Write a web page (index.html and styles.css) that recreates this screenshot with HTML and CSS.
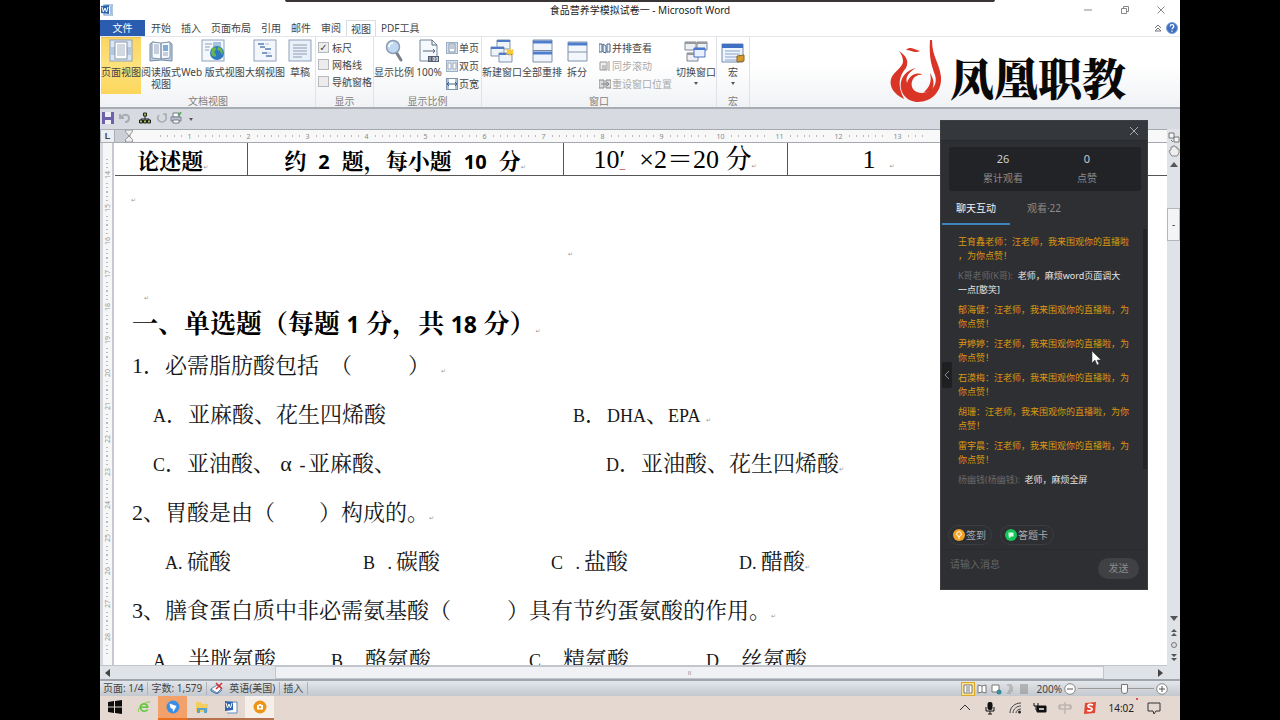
FILE: index.html
```html
<!DOCTYPE html>
<html lang="zh-CN">
<head>
<meta charset="utf-8">
<title>食品营养学模拟试卷一 - Microsoft Word</title>
<link rel="stylesheet" href="styles.css">
</head>
<body>
<div class="screen">
  <div class="share-bar"></div>

  <header class="titlebar">
    <svg class="app-icon" viewBox="0 0 12 12"><rect x="3" y="1" width="9" height="10" fill="#fff" stroke="#6d94c8"/><path d="M9 3h2M9 5h2M9 7h2M9 9h2" stroke="#4d7ab8"/><path d="M0 2l8-1v9l-8-1z" fill="#2b62ae"/><path d="M1 3l1.300 5L4 4l1.500 4L7 3" fill="none" stroke="#fff"/></svg>
    <h1 class="title">食品营养学模拟试卷一 - Microsoft Word</h1>
    <div class="window-buttons">
      <button aria-label="最小化"><svg viewBox="0 0 10 10"><path d="M1 5h8"/></svg></button>
      <button aria-label="还原"><svg viewBox="0 0 10 10"><path d="M1.500 3.500h5v5h-5zM3.500 3.500v-2h5v5h-2"/></svg></button>
      <button aria-label="关闭"><svg viewBox="0 0 10 10"><path d="M1.500 1.500l7 7M8.500 1.500l-7 7"/></svg></button>
    </div>
  </header>

  <nav class="tabs">
    <button class="tab file">文件</button>
    <button class="tab">开始</button>
    <button class="tab">插入</button>
    <button class="tab">页面布局</button>
    <button class="tab">引用</button>
    <button class="tab">邮件</button>
    <button class="tab">审阅</button>
    <button class="tab active">视图</button>
    <button class="tab">PDF工具</button>
    <span class="tabs-end">
      <svg class="i8" viewBox="0 0 8 8"><path d="M1 4l3-3 3 3M1 7l3-3 3 3z" fill="none" stroke="#777"/></svg>
      <svg class="i12" viewBox="0 0 12 12"><circle cx="6" cy="6" r="5.500" fill="#3e6fc0" stroke="#7da0d8"/><path d="M4.200 4.500c0-2.400 3.600-2.400 3.600 0C7.800 5.800 6 5.800 6 7.300M6 8.500v1.200" fill="none" stroke="#fff" stroke-width="1.300"/></svg>
    </span>
  </nav>

  <section class="ribbon">
    <div class="group g-views">
      <div class="group-body">
        <button class="big w40 selected"><svg viewBox="0 0 24 24"><rect x="1" y="1" width="22" height="21" fill="#dce6f2" stroke="#8ea2bd"/><rect x="1.500" y="8" width="21" height="8" fill="#b6c8dd"/><rect x="6" y="3" width="12" height="17" fill="#fff" stroke="#8795ab"/><path d="M8 6h8M8 8h8M8 10h8M8 12h8M8 14h8M8 16h8" stroke="#a5b1c2"/></svg>页面视图</button>
        <button class="big w40"><svg viewBox="0 0 24 24"><path d="M1 5l3-2 8 2 8-2 3 2v17l-11-1-11 1z" fill="#bdd0e4" stroke="#7488a3"/><path d="M3 3l9 1v16l-9-1zM21 3l-9 1v16l9-1z" fill="#f6f9fd" stroke="#8495ab"/><path d="M5 6h5M5 8h5M5 10h5M5 12h5M5 14h5M14 14h5M14 16h5" stroke="#94a4b8"/><rect x="14" y="6" width="5" height="6" fill="#7eacd8"/></svg>阅读版式<br>视图</button>
        <button class="big w62"><svg viewBox="0 0 24 24"><rect x="1" y="1" width="22" height="21" fill="#f4f8fd" stroke="#8ea2bd"/><path d="M4 5h7M4 8h5M4 11h4" stroke="#8fa1b8"/><rect x="12" y="3" width="8" height="5" fill="#a4c4e3"/><circle cx="16" cy="14" r="7" fill="#2e78c1"/><path d="M11 9c4-2 5 1 3 3s2 3 1 5-5-1-5-3zM17 8c4 0 6 5 4 8l-2-4-3-1z" fill="#67b64a"/></svg>Web 版式视图</button>
        <button class="big w40"><svg viewBox="0 0 24 24"><rect x="1" y="1" width="22" height="21" fill="#f3f7fc" stroke="#8ea2bd"/><path d="M5 5h6M7 8h5M12 10h6M9 14h5M13 17h6" stroke="#7d9bc4" stroke-width="2"/><path d="M12 5h4M14 14h4" stroke="#afc1d6"/></svg>大纲视图</button>
        <button class="big w28"><svg viewBox="0 0 24 24"><rect x="1" y="1" width="22" height="21" fill="#e9f0f8" stroke="#8ea2bd"/><path d="M5 6h14M5 9h14M5 12h14M5 15h14M5 18h9" stroke="#8b9cb3"/></svg>草稿</button>
      </div>
      <div class="group-name">文档视图</div>
    </div>
    <div class="group g-show">
      <div class="group-body checks">
        <label><input type="checkbox" checked>标尺</label>
        <label><input type="checkbox">网格线</label>
        <label><input type="checkbox">导航窗格</label>
      </div>
      <div class="group-name">显示</div>
    </div>
    <div class="group g-zoom">
      <div class="group-body">
        <button class="big w40"><svg viewBox="0 0 24 24"><path d="M14 13l5 8" stroke="#787f8c" stroke-width="3" stroke-linecap="round"/><circle cx="11" cy="8" r="6.500" fill="#bfd9f2" stroke="#8a9db5" stroke-width="1.500"/><path d="M7 8c0-3 2-4 4-4" stroke="#fff" stroke-width="1.500" fill="none"/></svg>显示比例</button>
        <button class="big w28"><svg viewBox="0 0 24 24"><path d="M3 1h12l5 5v16H3z" fill="#f5f8fc" stroke="#74859c"/><path d="M15 1v5h5M6 12h12M16 10l2 2-2 2" fill="none" stroke="#56657a"/><rect x="11" y="17" width="11" height="6" fill="#515d72"/><path d="M13 18v4M16 18.500h1.500v3H16zM19 18.500h1.500v3H19z" fill="none" stroke="#fff" stroke-width=".7"/></svg>100%</button>
        <div class="stack">
          <button class="small"><svg viewBox="0 0 12 12"><rect x=".5" y=".5" width="11" height="11" fill="#d5e0ee" stroke="#a0aec2"/><rect x="3" y="2" width="6" height="8" fill="#fff" stroke="#8195b0"/><path d="M4 4h4M4 6h4" stroke="#8195b0"/></svg>单页</button>
          <button class="small"><svg viewBox="0 0 12 12"><rect x=".5" y=".5" width="11" height="11" fill="#d5e0ee" stroke="#a0aec2"/><path d="M2 3h3v6H2zM7 3h3v6H7z" fill="#fff" stroke="#a0aec2"/></svg>双页</button>
          <button class="small"><svg viewBox="0 0 12 12"><rect x=".5" y=".5" width="11" height="11" fill="#a9c0dc" stroke="#8093ae"/><rect x="3" y="1" width="6" height="10" fill="#fff"/><path d="M1 6h10M3 4L1 6l2 2M9 4l2 2-2 2" stroke="#3d5f92" fill="none"/></svg>页宽</button>
        </div>
      </div>
      <div class="group-name">显示比例</div>
    </div>
    <div class="group g-window">
      <div class="group-body">
        <button class="big w40"><svg viewBox="0 0 24 24"><g fill="#eef4fb" stroke="#8193ac"><path d="M7 1h13v9H7z"/><path d="M1 8h13v9H1z"/><path d="M9 14h13v9H9z"/></g><path d="M7 2h13M1 9h13M9 15h13" stroke="#4d7acb" stroke-width="2"/><path d="M20 8l1 3 3-1-1 3 1 3-3-1-1 3-1-3-3 1 1-3-1-3 3 1z" fill="#f7c837"/></svg>新建窗口</button>
        <button class="big w40"><svg viewBox="0 0 24 24"><path d="M3 1h19v22H3z" fill="#f1f5fb" stroke="#7f91aa"/><path d="M3 3h19M3 14h19" stroke="#4f7dce" stroke-width="3"/><path d="M3 11.500h19" stroke="#75879e"/></svg>全部重排</button>
        <button class="big w28"><svg viewBox="0 0 24 24"><path d="M3 3h19v19H3z" fill="#f3f7fb" stroke="#7f91aa"/><path d="M3 5h19" stroke="#4f7dce" stroke-width="3"/><path d="M3 13h19" stroke="#8495ab"/></svg>拆分</button>
        <div class="stack wide">
          <button class="small"><svg viewBox="0 0 12 12"><path d="M0 2h3v8H0zM4 2l3 2v7l-3-1zM8 2h3v8H8z" fill="#edf3fb" stroke="#4d668c"/></svg>并排查看</button>
          <button class="small" disabled><svg viewBox="0 0 12 12"><path d="M1 2h7v8H1zM4 5v5M6 5v5M10 1v10" fill="#eee" stroke="#999"/></svg>同步滚动</button>
          <button class="small" disabled><svg viewBox="0 0 12 12"><path d="M0 2h5v8H0zM7 2h5v8H7zM2 6h8M8 4l2 2-2 2" fill="#ddd" stroke="#888"/></svg>重设窗口位置</button>
        </div>
        <button class="big w40 split"><svg viewBox="0 0 24 24"><g fill="#edf1f6" stroke="#7f8794"><path d="M1 3h11v8H1zM13 3h10v8H13zM3 14h11v8H3z"/></g><path d="M1 4h22M3 15h11" stroke="#999" stroke-width="2"/><path d="M10 9h11v9H10z" fill="#e8f1fd" stroke="#4772bd"/><path d="M10 10h11" stroke="#4a78d0" stroke-width="2"/></svg>切换窗口<i class="drop"></i></button>
      </div>
      <div class="group-name">窗口</div>
    </div>
    <div class="group g-macro">
      <div class="group-body">
        <button class="big w32"><svg viewBox="0 0 24 24"><path d="M1 5h21v18H1z" fill="#eff5fd" stroke="#708ab0"/><path d="M1 7h21" stroke="#3f70c4" stroke-width="4"/><path d="M4 12h15M4 15h15M4 18h15M4 21h15" stroke="#88a3cb"/><path d="M16 17l7-1v6l-7 1z" fill="#d59a30" stroke="#8c681e"/></svg>宏<i class="drop"></i></button>
      </div>
      <div class="group-name">宏</div>
    </div>
    <div class="brand">
      <svg viewBox="0 0 52 64"><g fill="#d93425"><path d="M27 29C14 32 8 44 14 55C18 61 24 63 29 63C43 63 53 52 52 38C51 25 43 18 43 1H41C40 18 42 25 46 36C49 46 43 52 35 54C25 55 20 48 24 40C26 37 30 35 34 36C27 32 20 37 18 44C16 38 20 33 27 29z"/><path d="M10 12C18 17 20 23 17 29C10 37 8 46 15 60C5 55 0 48 2 40C4 33 13 29 14 23C14 19 13 16 10 12z"/><path d="M17 11C21 7 24 10 31 12C26 15 22 11 17 11z"/><path d="M41 34C43 42 41 48 34 54L42 52C46 47 45 40 41 34z"/></g></svg>
      <strong>凤凰职教</strong>
    </div>
  </section>

  <div class="quick">
    <svg viewBox="0 0 12 12"><path d="M0 0h12v12H0z" fill="#6d61a8"/><path d="M3 0h6v5H3zM3 8h6v4H3z" fill="#f0eff8"/></svg>
    <svg viewBox="0 0 12 12"><path d="M2 5c4-4 8-2 8 1s-2 4-4 4M1 2v4h4" fill="none" stroke="#a7abb3" stroke-width="2"/></svg>
    <svg viewBox="0 0 12 12"><path d="M6 4v3M2 9V7h8v2" fill="none" stroke="#222"/><path d="M4.500 1h3v3h-3zM.5 8h3v3h-3zM4.500 8h3v3h-3zM8.500 8h3v3h-3z" fill="#9db84c" stroke="#222"/></svg>
    <svg viewBox="0 0 12 12"><path d="M3 3c-3 4 0 7 3 7s6-4 3-7M7 2h3v3" fill="none" stroke="#aaaeb5" stroke-width="1.700"/></svg>
    <svg viewBox="0 0 12 12"><path d="M3 1h6v4H3z" fill="#fff" stroke="#778"/><path d="M1 5h10v4H1z" fill="#b9c1cc" stroke="#7b8594"/><path d="M3 8h6v3H3z" fill="#fff" stroke="#778"/><path d="M8 2l1 1 2-3" stroke="#4ea34c" fill="none" stroke-width="1.500"/></svg>
    <i class="drop"></i>
  </div>

  <main class="workspace">
    <div class="corner">L</div>
    <div class="ruler-h">
      <svg class="indent" viewBox="0 0 10 14"><path d="M1 0h8v2L5 7l4 4v3H1v-3l4-4-4-5z" fill="#eee" stroke="#888"/></svg>
      <span>1</span><span>2</span><span>3</span><span>4</span><span>5</span><span>6</span><span>7</span><span>8</span><span>9</span><span>10</span><span>11</span><span>12</span><span>13</span>
    </div>
    <div class="ruler-v"><span>14</span><span>15</span><span>16</span><span>17</span><span>18</span><span>19</span><span>20</span><span>21</span><span>22</span><span>23</span><span>24</span><span>25</span><span>26</span><span>27</span><span>28</span></div>

    <article class="page">
      <table class="scores">
        <tr><td class="c1">论述题<s>↵</s></td><td class="c2">约<b>2</b>题，每小题<b>10</b>分<s>↵</s></td><td class="c3">10<u>′</u><em>×2＝20</em> 分<s>↵</s></td><td class="c4">1<s>↵</s></td></tr>
      </table>
      <p class="empty e1"><s>↵</s></p>
      <p class="empty e2"><s>↵</s></p>
      <p class="empty e3"><s>↵</s></p>
      <h2>一、单选题（每题 <b>1</b> 分，共 <b>18</b> 分）<s>↵</s></h2>
      <p class="q">1．必需脂肪酸包括<i class="half"></i>（<i class="blank long"></i>）<i class="half"></i><s>↵</s></p>
      <p class="q opts two"><span><b>A</b>．亚麻酸、花生四烯酸</span><span><b>B</b>．<b>DHA</b>、<b>EPA</b> <s>↵</s></span></p>
      <p class="q opts two later"><span><b>C</b>．亚油酸、<i class="alpha">α</i><b class="half">-</b>亚麻酸、</span><span><b>D</b>．亚油酸、花生四烯酸<s>↵</s></span></p>
      <p class="q">2、胃酸是由（<i class="blank"></i>）构成的。<s>↵</s></p>
      <p class="q opts four"><span><b class="tag">A.</b>硫酸</span><span><b class="tag spaced">B .</b>碳酸</span><span><b class="tag spaced">C .</b>盐酸</span><span><b class="tag">D.</b>醋酸<s>↵</s></span></p>
      <p class="q">3、膳食蛋白质中非必需氨基酸（<i class="blank long"></i>）具有节约蛋氨酸的作用。<s>↵</s></p>
      <p class="q opts four near"><span><b>A</b>．半胱氨酸</span><span><b>B</b>．酪氨酸</span><span><b>C</b>．精氨酸</span><span><b>D</b>．丝氨酸</span></p>
    </article>

    <div class="scroll-v">
      <svg viewBox="0 0 12 12"><path d="M1 1h5v5H1zM6 5h5v5H6zM3 8l2 2" fill="#f4f4f4" stroke="#777"/></svg>
      <svg viewBox="0 0 12 12"><path d="M3 10L1 6l2-1V2h2V1h2v1h2v2h2v4l-2 3H4z" fill="#eee" stroke="#888"/></svg>
      <i class="arrow up"></i>
      <div class="track"><div class="thumb">-</div></div>
      <i class="arrow down"></i>
      <svg viewBox="0 0 12 12"><path d="M3 6l3-3 3 3zM3 10l3-3 3 3z" fill="#555"/></svg>
      <svg viewBox="0 0 12 12"><circle cx="6" cy="6" r="2.500" fill="#ddd" stroke="#777"/></svg>
      <svg viewBox="0 0 12 12"><path d="M3 2l3 3 3-3zM3 6l3 3 3-3z" fill="#555"/></svg>
    </div>
    <div class="scroll-h"><i class="arrow left"></i><div class="thumb">ıı</div><i class="arrow right"></i></div>
  </main>

  <footer class="status">
    <span>页面: 1/4</span><span>字数: 1,579</span>
    <span class="lang"><svg viewBox="0 0 14 12"><path d="M1 7l6-4 5 3-5 5z" fill="#fff" stroke="#5d7fb6"/><path d="M1 7v2l6 3 5-4" fill="none" stroke="#416ba8"/><path d="M6 1l6 6M12 1L6 7" stroke="#d22f32" stroke-width="1.500"/></svg>英语(美国)</span><span>插入</span>
    <div class="view-tools">
      <button class="on" aria-label="页面视图"><svg viewBox="0 0 12 12"><path d="M2 2h8v8H2zM4 4h4M4 6h4M4 8h4" fill="#fff" stroke="#777"/></svg></button>
      <button aria-label="阅读版式视图"><svg viewBox="0 0 12 12"><path d="M2 2l4 1 4-1v8l-4-1-4 1zM6 3v6" fill="#fff" stroke="#777"/></svg></button>
      <button aria-label="Web 版式视图"><svg viewBox="0 0 12 12"><path d="M2 2h7v7H2z" fill="#fff" stroke="#777"/><circle cx="9" cy="9" r="2.500" fill="#398b97"/></svg></button>
      <button aria-label="大纲视图"><svg viewBox="0 0 12 12"><path d="M3 2h5M5 4h4M5 6h4M4 8h5M3 10h4" stroke="#999"/></svg></button>
      <button aria-label="草稿"><svg viewBox="0 0 12 12"><path d="M2 2h8M2 4h8M2 6h8M2 8h8M2 10h8" stroke="#888"/></svg></button>
      <span class="percent">200%</span>
      <button aria-label="缩小"><svg viewBox="0 0 12 12"><circle cx="6" cy="6" r="5.300" fill="#fff" stroke="#888"/><path d="M3 6h6" stroke="#555"/></svg></button>
      <input class="zoom" type="range" min="0" max="100" value="62" aria-label="显示比例">
      <button aria-label="放大"><svg viewBox="0 0 12 12"><circle cx="6" cy="6" r="5.300" fill="#fff" stroke="#888"/><path d="M3 6h6M6 3v6" stroke="#555"/></svg></button>
    </div>
  </footer>

  <div class="taskbar">
    <button aria-label="开始"><svg viewBox="0 0 14 14"><path d="M0 2l6-1v5.600H0zM7 1l7-1v6.600H7zM0 7.500h6V13l-6-1zM7 7.500h7V14l-7-1z" fill="#0d0d0d"/></svg></button>
    <button aria-label="浏览器"><svg viewBox="0 0 14 14"><path d="M11.500 8H4.500c0 3 4 3 5 1.500h2C10 13 3 13 2.500 7.500 2.500 2 11.500 1 11.500 8zM4.500 6.500h5c-.5-2-4-2.500-5 0z" fill="#5cc83a"/><path d="M2 12C-1 9 8 1 13 2" fill="none" stroke="#7dcb42"/></svg></button>
    <button class="hot" aria-label="钉钉"><svg viewBox="0 0 14 14"><circle cx="7" cy="7" r="6.500" fill="#3c8de4"/><path d="M3.500 3.500l7 2.500-1.500 3-2 3-.3-3L4.500 8z" fill="#fff"/></svg></button>
    <button class="open" aria-label="文件资源管理器"><svg viewBox="0 0 14 14"><path d="M1 2h5l1 2h6v8H1z" fill="#f3cd5d"/><path d="M2 8h10v5H9v-3H5v3H2z" fill="#5da3cc"/></svg></button>
    <button class="open" aria-label="Word"><svg viewBox="0 0 14 14"><path d="M5 2h8v11H3" fill="#fff" stroke="#6289bd"/><path d="M1 1l8 1v8l-8 1z" fill="#2e63af"/><path d="M2 3l1.500 5L5 4l1.500 4L8 3" fill="none" stroke="#fff"/></svg></button>
    <button class="current" aria-label="录屏"><svg viewBox="0 0 14 14"><circle cx="7" cy="7" r="6.500" fill="#ec9418"/><path d="M4 5h1.500l.5-1h2l.5 1H10v4.500H4z" fill="#fff"/><circle cx="7" cy="7" r="1.200" fill="#ec9418"/></svg></button>
    <div class="tray">
      <svg viewBox="0 0 14 14"><path d="M2 9l5-5 5 5" fill="none" stroke="#333"/></svg>
      <svg viewBox="0 0 14 14"><rect x="4.500" y="1" width="5" height="8" rx="2" fill="#111"/><path d="M3 6v4h8V6M7 10v3M5 13h4" fill="none" stroke="#111"/></svg>
      <svg viewBox="0 0 14 14"><path d="M2 12C2 6 7 2 13 2M5 12c0-4 4-7 8-7M8 12c0-2 2-4 5-4" fill="none" stroke="#444"/><circle cx="11.500" cy="11" r="1.500" fill="#222"/></svg>
      <svg viewBox="0 0 14 14"><path d="M4 5h9v6H4z" fill="#111" stroke="#111"/><path d="M1 2v3h4V2M3 5v4h2" fill="none" stroke="#111"/><path d="M6 7h5v2H6z" fill="#bbb"/></svg>
      <svg viewBox="0 0 14 14"><path d="M7 1v12M2 4h10v4H2zM1 4v4M13 4v4" fill="none" stroke="#c0b6b1" stroke-width="1.500"/></svg>
      <svg viewBox="0 0 14 14"><path d="M2 2l11-1-1 11-11 1z" fill="#e04631"/><path d="M10 4C5 2 3 6 7 6.500S9 11 4 9.500" fill="none" stroke="#fff" stroke-width="1.700"/></svg>
      <time>14:02</time>
      <svg viewBox="0 0 14 14"><path d="M1 2h12v8H9l-2 3-1-3H1z" fill="none" stroke="#333"/></svg>
      <i class="dot"></i>
    </div>
  </div>

  <aside class="chat">
    <div class="chat-top"><button aria-label="关闭"><svg viewBox="0 0 10 10"><path d="M1 1l8 8M9 1L1 9"/></svg></button></div>
    <dl class="stats"><div><dd>26</dd><dt>累计观看</dt></div><div><dd>0</dd><dt>点赞</dt></div></dl>
    <div class="chat-tabs"><button class="active">聊天互动</button><button>观看·22</button></div>
    <div class="messages">
      <p class="like">王育鑫老师：汪老师，我来围观你的直播啦<br>，为你点赞！</p>
      <p><span>K哥老师(K哥):</span>&nbsp; 老师，麻烦word页面调大<br>一点[憨笑]</p>
      <p class="like">郁海健：汪老师，我来围观你的直播啦，为<br>你点赞！</p>
      <p class="like">尹婷婷：汪老师，我来围观你的直播啦，为<br>你点赞！</p>
      <p class="like">石漠梅：汪老师，我来围观你的直播啦，为<br>你点赞！</p>
      <p class="like">胡珊：汪老师，我来围观你的直播啦，为你<br>点赞！</p>
      <p class="like">雷宇晨：汪老师，我来围观你的直播啦，为<br>你点赞！</p>
      <p><span>杨幽钱(杨幽钱):</span>&nbsp; 老师，麻烦全屏</p>
    </div>
    <div class="actions">
      <button><svg viewBox="0 0 12 12"><circle cx="6" cy="6" r="6" fill="#f2a324"/><circle cx="6" cy="5" r="2.300" fill="none" stroke="#fff"/><path d="M6 7v3" stroke="#fff"/></svg>签到</button>
      <button><svg viewBox="0 0 12 12"><circle cx="6" cy="6" r="6" fill="#17c45a"/><path d="M3.500 3.500h5v4H6l-2 2v-2h-.5z" fill="#d9ffe4"/></svg>答题卡</button>
    </div>
    <form class="compose"><input type="text" placeholder="请输入消息" aria-label="请输入消息"><button type="button">发送</button></form>
    <button class="collapse" aria-label="收起"><svg viewBox="0 0 6 10"><path d="M5 1L1 5l4 4"/></svg></button>
    <i class="chat-scroll"></i>
    <svg class="cursor" viewBox="0 0 10 16"><path d="M1 1v12l3-3 2 5 2-1-2-4h4z" fill="#fff" stroke="#333" stroke-width=".5"/></svg>
  </aside>
</div>
</body>
</html>
```
FILE: styles.css
```css
* { box-sizing: border-box; }
body { margin: 0; background: #000; color: #444; font: 10px/14px "Noto Sans", "Noto Sans CJK SC", sans-serif; }
button { font: inherit; color: inherit; border: 0; padding: 0; margin: 0; background: none; }
svg { display: block; flex: none; }
p, h1, h2, dl, dd, dt { margin: 0; font-weight: 400; }
.screen { position: relative; height: 100vh; margin: 0 100px; display: flex; flex-direction: column; background: #fff; overflow: hidden; }
.share-bar { position: absolute; top: 0; left: 185px; right: 185px; height: 2px; background: #383534; border-radius: 0 0 3px 3px; }

.titlebar { height: 20px; flex: none; display: grid; grid-template-columns: 100px 1fr 100px; align-items: center; }
.app-icon { width: 12px; height: 12px; margin-left: 1px; }
.title { font-size: 10px; text-align: center; color: #222; }
.window-buttons { display: flex; justify-content: space-between; padding: 0 14px 0 3px; }
.window-buttons svg { width: 10px; height: 10px; fill: none; stroke: #888; }

.tabs { height: 17px; flex: none; display: flex; border-bottom: 1px solid #e3e6ea; }
.tab { padding: 0 5px; }
.tab.file { width: 45px; background: #2a5db0; color: #fff; margin-right: 1px; }
.tab.active { border: 1px solid #dadde2; border-bottom: 0; padding: 0 4px; background: #fff; }
.tabs-end { margin-left: auto; display: flex; align-items: center; gap: 4px; padding-right: 2px; }
.i8 { width: 8px; height: 8px; }
.i12 { width: 12px; height: 12px; }

.ribbon { height: 72px; flex: none; display: flex; background: linear-gradient(#fff 40%, #f0f2f5); border-bottom: 2px solid #a8adb4; }
.group { display: flex; flex-direction: column; border-right: 1px solid #dfe2e6; white-space: nowrap; }
.group-body { flex: 1; display: flex; }
.group-name { text-align: center; color: #808080; line-height: 12px; }
.g-views { width: 216px; padding-left: 1px; }
.g-show { width: 58px; }
.g-zoom { width: 108px; }
.g-window { width: 235px; }
.g-macro { width: 33px; }
.big { display: flex; flex-direction: column; align-items: center; line-height: 12px; padding-top: 2px; height: 57px; }
.big svg { width: 24px; height: 24px; margin-bottom: 3px; }
.w40 { width: 40px; }
.w62 { width: 64px; }
.w28 { width: 30px; }
.w32 { width: 32px; }
.selected { background: linear-gradient(#fbd562, #fde27d 50%, #fbd65a); border-top: 1px solid #f0c34c; padding-top: 1px; }
.split { margin-left: auto; }
.drop { border: 2px solid transparent; border-top: 3px solid #555; border-bottom: 0; margin-top: 4px; }
.checks { flex-direction: column; padding: 2px 0 0 2px; }
.checks label { height: 17px; display: flex; align-items: center; gap: 3px; }
.checks input { appearance: none; width: 11px; height: 11px; margin: 0; border: 1px solid #b5b9be; background: #ececec; display: grid; place-items: center; }
.checks input:checked::after { content: "✓"; font: bold 10px/9px "DejaVu Sans", sans-serif; color: #444; }
.stack { display: flex; flex-direction: column; padding: 2px 0 0 2px; }
.stack.wide { padding-left: 7px; }
.small { display: flex; align-items: center; height: 18px; gap: 1px; }
.small svg { width: 12px; height: 12px; }
.small:disabled { color: #aaa; }
.brand { margin-left: auto; padding: 2px 54px 0 0; display: flex; gap: 9px; }
.brand svg { width: 52px; height: 64px; }
.brand strong { font: 900 44px/76px "Noto Serif CJK SC", "Noto Sans CJK SC", sans-serif; color: #0b0908; }

.quick { height: 20px; flex: none; display: flex; align-items: center; gap: 5px; padding: 0 0 2px 2px; background: #d7dbe1; }
.quick svg { width: 12px; height: 12px; }
.quick svg:nth-child(2) { margin-right: 3px; }
.quick svg:nth-child(4) { margin-right: -3px; }
.quick .drop { margin: 2px 2px 0; }

.workspace { flex: 1; min-height: 0; display: grid; grid-template-columns: 15px 1fr 13px; grid-template-rows: 14px minmax(0, 1fr) 14px; }
.corner { background: #eceef1; border: 1px solid #a9adb4; font: bold 9px/12px "Liberation Sans", sans-serif; text-align: center; }
.ruler-h { display: flex; align-items: center; overflow: hidden; background: #f8f8f9; border: solid #a5a9b0; border-width: 1px 0; }
.ruler-h span { flex: none; width: 59px; display: flex; align-items: center; font-size: 7px; line-height: 11px; color: #888; gap: 6px; }
.ruler-h span::before, .ruler-h span::after { content: ""; flex: 1; height: 2px; background: repeating-linear-gradient(90deg, #bbb 0 1px, transparent 1px 7px); }
.indent { width: 28px; height: 12px; margin-right: 17px; background: linear-gradient(90deg, #ccd0d6 16px, transparent 16px); }
.ruler-v { grid-row: 2 / 3; grid-column: 1; background: linear-gradient(90deg, #d5d8dd 3px, #f7f7f8 3px 12px, #c6cad0 12px 14px, #fff 14px); padding-top: 16px; overflow: hidden; }
.ruler-v span { display: flex; align-items: center; gap: 3px; height: 33px; width: 15px; writing-mode: vertical-rl; transform: rotate(180deg); font-size: 7px; line-height: 15px; color: #999; }
.ruler-v span::before, .ruler-v span::after { content: ""; flex: 1; width: 2px; background: repeating-linear-gradient(#bbb 0 1px, transparent 1px 4px); }

.page { background: #fff; overflow: hidden; color: #171717; font: 300 22px/49px "Liberation Serif", "Noto Serif CJK SC", "Noto Sans CJK SC", serif; }
.page td, .page h2, .page p { white-space: pre; }
.page s { text-decoration: none; font: 6px/6px "DejaVu Sans", sans-serif; color: #999; }
.page b { font: 18px/1 "Liberation Serif", serif; }
.page .scores { width: 100%; height: 33px; border-collapse: collapse; table-layout: fixed; font: 700 22px/31px "Noto Serif CJK SC", "Noto Sans CJK SC", serif; color: #000; }
.scores td { padding: 0; border: solid #555; border-width: 0 1px 1px 0; text-align: center; }
.page .scores b { font: 700 20px/1 "Open Sans", sans-serif; margin: 0 12px; }
.scores .c1 { width: 132px; padding-right: 16px; }
.scores .c2 { width: 316px; }
.scores .c3 { width: 224px; font: 500 26px/31px "Liberation Serif", "Noto Serif CJK SC", "Noto Sans CJK SC", serif; }
.scores .c4 { font: 26px/31px "Liberation Serif", serif; text-align: left; padding-left: 75px; border-right: 0; }
.scores u { text-decoration: underline 1px #d66; }
.scores em { font-style: normal; margin-left: 14px; }
.scores .c4 s { margin-left: 14px; }
.page .empty { line-height: 20px; }
.e1 { height: 54px; padding: 9px 0 0 16px; }
.e2 { height: 44px; padding: 9px 0 0 453px; }
.e3 { height: 29px; padding: 9px 0 0 29px; }
.page h2 { font: 700 26px/38px "Noto Serif CJK SC", "Noto Sans CJK SC", serif; padding-left: 17px; color: #000; }
.page h2 b { font: 700 23px/1 "Open Sans", sans-serif; }
.q { height: 49px; padding-left: 17px; }
.half { display: inline-block; width: 11px; text-align: center; }
.blank { display: inline-block; width: 44px; }
.blank.long { width: 56px; }
.alpha { display: inline-block; width: 22px; text-align: center; font-style: normal; }
.tag { display: inline-block; width: 22px; }
.tag.spaced { width: 33px; padding-right: 4px; text-align: justify; text-align-last: justify; white-space: normal; }
.opts { display: grid; padding-left: 38px; }
.two { grid-template-columns: 420px 1fr; }
.two.later { grid-template-columns: 453px 1fr; }
.four { grid-template-columns: 198px 188px 188px 1fr; padding-left: 50px; }
.four.near { grid-template-columns: 178px 198px 177px 1fr; padding-left: 38px; }

.scroll-v { grid-column: 3; grid-row: 1 / 4; display: flex; flex-direction: column; align-items: center; gap: 1px; background: #dfe2e7; padding: 3px 0 15px; }
.scroll-v svg { width: 12px; height: 12px; }
.arrow { border: 4px solid transparent; flex: none; }
.up { border-bottom: 5px solid #555; border-top: 0; margin: 4px 0; }
.down { border-top: 5px solid #555; border-bottom: 0; margin: 4px 0; }
.left { border-right: 5px solid #444; border-left: 0; margin-left: 5px; }
.right { border-left: 5px solid #444; border-right: 0; margin-right: 4px; }
.track { flex: 1; width: 100%; padding-top: 36px; }
.track .thumb { height: 33px; background: #f3f4f6; border: 1px solid #b1b5bc; text-align: center; line-height: 30px; }
.scroll-h { grid-column: 1 / 3; display: flex; align-items: center; background: #dfe2e7; border-top: 1px solid #c2c6cc; }
.scroll-h .thumb { margin: 0 54px 0 165px; flex: 1; height: 13px; background: #eff1f4; border: 1px solid #c2c5cb; text-align: center; font-size: 7px; line-height: 11px; color: #999; }

.status { height: 17px; flex: none; display: flex; align-items: center; background: linear-gradient(#e3e6ea, #c3c8cf); border-top: 2px solid #9fa5ad; white-space: nowrap; }
.status > span { padding: 0 4px 0 3px; border-right: 1px solid #aeb3ba; line-height: 13px; }
.status .lang { display: flex; gap: 5px; }
.lang svg { width: 14px; height: 12px; }
.view-tools { margin-left: auto; display: flex; align-items: center; padding-right: 12px; gap: 2px; }
.view-tools svg { width: 12px; height: 12px; }
.view-tools .on { background: #fbe28c; outline: 1px solid #dda928; }
.view-tools .percent { margin-left: 5px; }
.zoom { appearance: none; width: 76px; height: 10px; margin: 0; background: linear-gradient(#999, #999) center / 100% 1px no-repeat; }
.zoom::-webkit-slider-thumb { appearance: none; width: 7px; height: 10px; background: #f8f8f8; border: 1px solid #777; border-radius: 0 0 3px 3px; }

.taskbar { height: 24px; flex: none; display: flex; background: #e5d8d0; }
.taskbar button { width: 29px; display: grid; place-items: center; border-bottom: 2px solid transparent; }
.taskbar svg { width: 14px; height: 14px; }
.taskbar .hot { background: #f3a16b; border-color: #e9701f; }
.taskbar .open { border-color: #b5724c; }
.taskbar .current { background: #f6efe9; border-color: #b5724c; }
.tray { position: relative; margin-left: auto; display: flex; align-items: center; gap: 11px; padding-right: 19px; color: #222; }
.tray time { font-size: 10px; margin-right: 2px; }
.dot { position: absolute; right: 42px; top: 2px; width: 2px; height: 2px; background: #d22; border-radius: 50%; }

.chat { position: absolute; top: 120px; right: 32px; width: 208px; height: 470px; display: flex; flex-direction: column; background: #2e2f32; border: 1px solid #3d3f43; color: #e4e4e5; font-size: 9px; line-height: 14px; }
.chat-top { height: 20px; flex: none; background: #34373b; border-bottom: 1px solid #292b2e; display: flex; justify-content: flex-end; align-items: center; padding-right: 8px; }
.chat-top svg { width: 10px; height: 10px; stroke: #aaa; fill: none; }
.stats { flex: none; margin: 6px 6px 0 8px; height: 44px; background: #222327; border-radius: 3px; display: flex; padding: 5px 12px 0; }
.stats div { width: 50%; display: flex; flex-direction: column; gap: 5px; text-align: center; }
.stats dd { font-size: 11px; line-height: 14px; color: #ccc; }
.stats dt { font-size: 10px; color: #8b8c8e; }
.chat-tabs { flex: none; height: 34px; display: flex; padding-left: 1px; font-size: 10px; color: #8b8c8e; }
.chat-tabs button { width: 68px; padding-top: 2px; border-bottom: 2px solid transparent; }
.chat-tabs .active { color: #f3f3f3; border-color: #3d85bd; }
.messages { flex: 1; padding: 10px 0 0 17px; display: flex; flex-direction: column; gap: 6px; white-space: nowrap; }
.messages .like { color: #dc9712; }
.messages span { color: #68696c; }
.actions { flex: none; display: flex; gap: 8px; padding: 0 7px 4px; font-size: 10px; }
.actions button { height: 20px; padding: 0 5px 0 4px; display: flex; align-items: center; gap: 1px; border: 1px solid #3c3d40; border-radius: 10px; color: #a9a9aa; }
.actions svg { width: 12px; height: 12px; }
.compose { flex: none; height: 40px; border-top: 1px solid #292a2d; display: flex; align-items: center; padding: 0 8px 3px 9px; }
.compose input { flex: 1; min-width: 0; height: 20px; margin-bottom: 8px; padding: 0; background: none; border: 0; color: #ddd; font: inherit; font-size: 10px; }
.compose input::placeholder { color: #646568; }
.compose button { width: 41px; height: 21px; border-radius: 11px; background: #404144; color: #88898b; font-size: 10px; }
.collapse { position: absolute; left: 1px; top: 241px; width: 10px; height: 26px; background: #1e1f21; border-radius: 2px; display: grid; place-items: center; }
.collapse svg { width: 6px; height: 10px; fill: none; stroke: #888; }
.chat-scroll { position: absolute; right: 0; top: 108px; width: 4px; height: 240px; background: #232427; }
.cursor { position: absolute; left: 150px; top: 229px; width: 10px; height: 16px; }
```
